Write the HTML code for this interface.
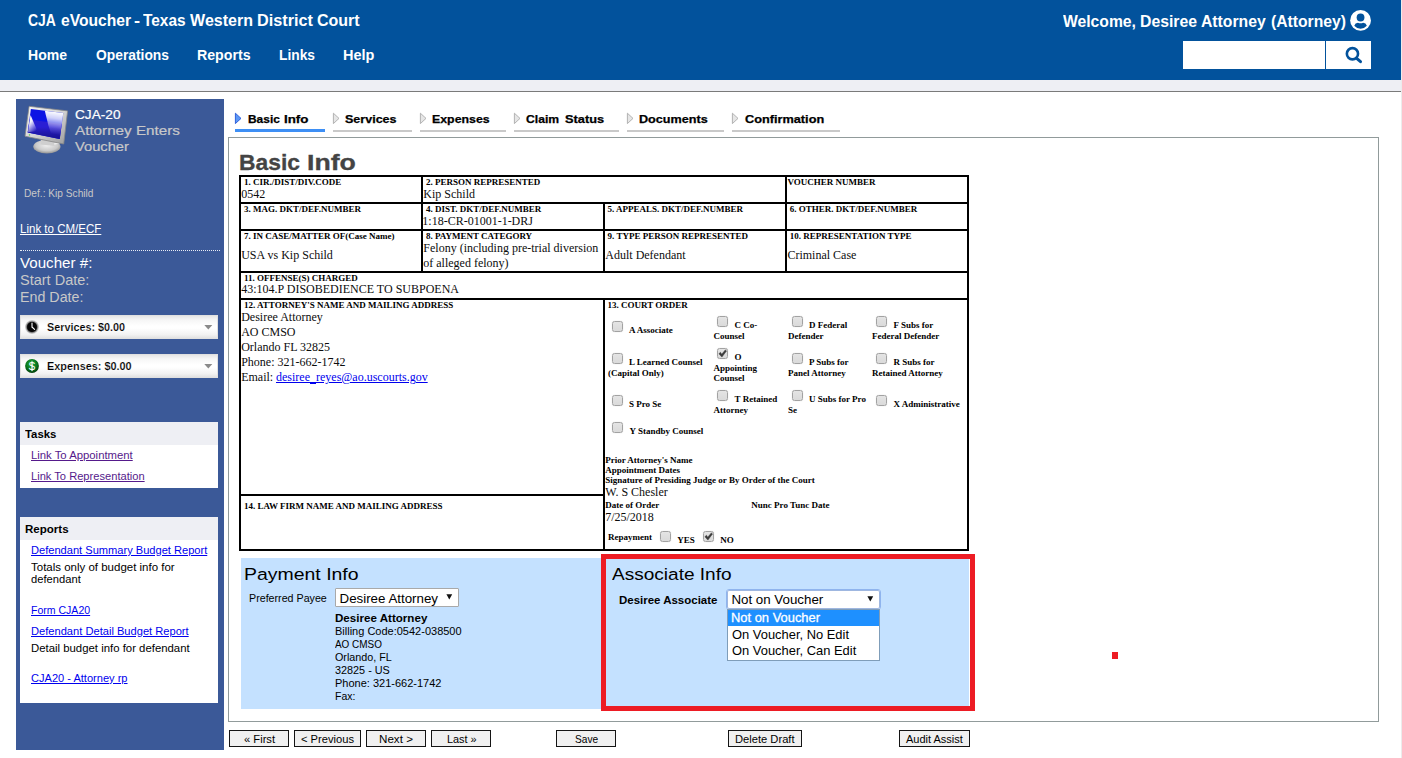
<!DOCTYPE html>
<html><head><meta charset="utf-8"><title>CJA eVoucher</title>
<style>
html,body{margin:0;padding:0;}
body{width:1402px;height:758px;position:relative;overflow:hidden;background:#fff;font-family:"Liberation Sans",sans-serif;}
.t{position:absolute;white-space:pre;line-height:normal;transform-origin:0 0;font-family:"Liberation Sans",sans-serif;display:block;}
.s{font-family:"Liberation Serif",serif;}
.b{position:absolute;box-sizing:border-box;}
.k{position:absolute;background:#000;}
.cb{position:absolute;box-sizing:border-box;width:11px;height:11px;border:1px solid #a2a2a2;border-radius:2.5px;background:linear-gradient(#e4e4e4,#dadada);box-shadow:0 0 1px rgba(0,0,0,0.22);}
.btn{position:absolute;box-sizing:border-box;height:17px;top:730px;border:1px solid #141414;background:#f0f0f0;}
svg{position:absolute;overflow:visible;}

</style></head>
<body>
<div class="b" style="left:0px;top:0px;width:1401px;height:80px;background:#02529c;"></div>
<div class="b" style="left:0px;top:80px;width:1401px;height:11px;background:#eeeff4;"></div>
<div class="b" style="left:0px;top:91px;width:1401px;height:1px;background:#7a7a7a;"></div>
<div class="b" style="left:1401px;top:0px;width:1px;height:758px;background:#ececec;"></div>
<div class="b" style="left:1183px;top:41px;width:142px;height:28px;background:#fff;"></div>
<div class="b" style="left:1326px;top:41px;width:45px;height:28px;background:#fff;"></div>
<svg style="left:1340px;top:44px" width="26" height="22" viewBox="1340 44 26 22"><circle cx="1352.45" cy="53.75" r="5.6" fill="none" stroke="#02529c" stroke-width="2.6"/><path d="M1356.7 58.4 L1360.5 61.7" stroke="#02529c" stroke-width="3" stroke-linecap="round"/></svg>
<svg style="left:1349px;top:9px" width="24" height="24" viewBox="1349 9 24 24"><g transform="translate(1360.55 20.4)"><circle cx="0" cy="0" r="10.4" fill="#fff"/><circle cx="0" cy="-2.9" r="3.9" fill="#02529c"/><path d="M-6.3 5.3 Q-5.4 2.5 -2.6 2.4 Q0 3.5 2.6 2.4 Q5.4 2.5 6.3 5.3 Q3.6 8.3 0 8.3 Q-3.6 8.3 -6.3 5.3Z" fill="#02529c"/></g></svg>
<div class="b" style="left:16px;top:99px;width:208px;height:651px;background:#3b5998;"></div>
<svg style="left:22px;top:102px" width="50" height="54" viewBox="22 102 50 54">
<defs>
<linearGradient id="mf" x1="0" y1="0" x2="1" y2="1"><stop offset="0" stop-color="#f6f6f6"/><stop offset="0.5" stop-color="#d4d4d4"/><stop offset="1" stop-color="#9c9c9c"/></linearGradient>
<linearGradient id="mg" gradientUnits="userSpaceOnUse" x1="55" y1="111.5" x2="52" y2="134"><stop offset="0" stop-color="#fff" stop-opacity="1"/><stop offset="0.3" stop-color="#fff" stop-opacity="0.8"/><stop offset="0.75" stop-color="#fff" stop-opacity="0.18"/><stop offset="1" stop-color="#fff" stop-opacity="0"/></linearGradient>
<linearGradient id="mg2" gradientUnits="userSpaceOnUse" x1="28.5" y1="124" x2="36" y2="131"><stop offset="0" stop-color="#fff" stop-opacity="0.95"/><stop offset="0.55" stop-color="#fff" stop-opacity="0.4"/><stop offset="1" stop-color="#fff" stop-opacity="0"/></linearGradient>
<linearGradient id="md" x1="0" y1="0" x2="0" y2="1"><stop offset="0" stop-color="#000" stop-opacity="0"/><stop offset="0.6" stop-color="#000" stop-opacity="0"/><stop offset="1" stop-color="#000040" stop-opacity="0.45"/></linearGradient>
<radialGradient id="mb" cx="0.5" cy="0.4" r="0.62"><stop offset="0" stop-color="#f0f0f0"/><stop offset="0.65" stop-color="#cacaca"/><stop offset="1" stop-color="#8a8a8a"/></radialGradient>
</defs>
<ellipse cx="46.9" cy="146.6" rx="13.6" ry="6.9" fill="url(#mb)"/>
<path d="M46 146.5 L58 141 L60 143.5Z" fill="#f2f2f2" opacity="0.8"/>
<path d="M41 139.5 L54 142 L54.5 146 L40.5 144.5Z" fill="#cfcfcf"/>
<polygon points="29.1,106.3 67.6,110.9 63.7,144 25,136.2" fill="url(#mf)" stroke="#868686" stroke-width="0.8" stroke-linejoin="round"/>
<polygon points="30.9,109.1 63.3,113 59.7,139 27.7,132.6" fill="#0c14e4"/>
<polygon points="29.6,119.5 61.8,124 59.7,139 27.7,132.6" fill="#2a1ed4"/>
<polygon points="30.9,109.1 63.3,113 59.7,139 27.7,132.6" fill="url(#md)"/>
<polygon points="44.8,110.8 63.3,113 60.2,135.5 51,133.6 48.4,125.5" fill="url(#mg)"/>
<polygon points="30.5,115 37.4,131 28,132.2" fill="url(#mg2)"/>
<circle cx="29.5" cy="134.9" r="0.7" fill="#3fcf3f"/>
</svg>
<div class="b" style="left:20px;top:250px;width:200px;height:1px;border-top:1px dotted #e8ecf5;"></div>
<div class="b" style="left:20px;top:315px;width:198px;height:24px;background:linear-gradient(#e6e6e6 0,#f6f6f6 18%,#fff 45%,#fff 55%,#f2f2f2 85%,#e2e2e2 100%);border:1px solid #e0e0e0;"></div>
<svg style="left:204px;top:325px" width="9" height="5" viewBox="0 0 9 5"><path d="M0.3 0 L8.3 0 L4.3 4.6Z" fill="#8a8a8a"/></svg>
<div class="b" style="left:20px;top:354px;width:198px;height:24px;background:linear-gradient(#e6e6e6 0,#f6f6f6 18%,#fff 45%,#fff 55%,#f2f2f2 85%,#e2e2e2 100%);border:1px solid #e0e0e0;"></div>
<svg style="left:204px;top:364px" width="9" height="5" viewBox="0 0 9 5"><path d="M0.3 0 L8.3 0 L4.3 4.6Z" fill="#8a8a8a"/></svg>
<svg style="left:24px;top:319px" width="16" height="16" viewBox="-8 -8 16 16"><circle r="7" fill="#dadada"/><circle r="6.5" fill="#b0b0b0"/><circle r="5.9" fill="#8a8a8a"/><circle r="5.3" fill="#4a4a4a"/><circle r="4.9" fill="#050505"/><path d="M0 0.3 L0 -3.9 M0 0 L2.6 2.3" stroke="#fff" stroke-width="1.1" stroke-linecap="round" fill="none"/></svg>
<svg style="left:24px;top:358px" width="16" height="16" viewBox="-8 -8 16 16"><defs><radialGradient id="gg" cx="0.45" cy="0.35" r="0.65"><stop offset="0" stop-color="#27a83e"/><stop offset="0.55" stop-color="#0a7d20"/><stop offset="1" stop-color="#013f0a"/></radialGradient></defs><circle r="6.9" fill="url(#gg)"/><text x="0" y="3.9" text-anchor="middle" font-family="Liberation Sans, sans-serif" font-size="11.5" fill="#fff">$</text><path d="M0 -5.2 L0 5.2" stroke="#fff" stroke-width="0.8"/></svg>
<div class="b" style="left:20px;top:422px;width:198px;height:66px;background:#fff;"></div>
<div class="b" style="left:20px;top:422px;width:198px;height:23px;background:#eeeff4;"></div>
<div class="b" style="left:20px;top:517px;width:198px;height:186px;background:#fff;"></div>
<div class="b" style="left:20px;top:517px;width:198px;height:23px;background:#eeeff4;"></div>
<div class="b" style="left:235px;top:129px;width:90px;height:3px;background:#3d8ff5;"></div>
<svg style="left:235px;top:112px" width="8" height="13" viewBox="0 0 8 13"><path d="M0.4 1.2 L6 6.4 L0.4 11.6Z" fill="#5b97f5" stroke="#2356d8" stroke-width="0.9" stroke-linejoin="round"/></svg>
<div class="b" style="left:333px;top:130px;width:79px;height:2px;background:#c9c9c9;"></div>
<svg style="left:333px;top:112px" width="8" height="13" viewBox="0 0 8 13"><path d="M0.4 1.2 L6 6.4 L0.4 11.6Z" fill="#e6e6e6" stroke="#ababab" stroke-width="0.9" stroke-linejoin="round"/></svg>
<div class="b" style="left:420px;top:130px;width:86px;height:2px;background:#c9c9c9;"></div>
<svg style="left:420px;top:112px" width="8" height="13" viewBox="0 0 8 13"><path d="M0.4 1.2 L6 6.4 L0.4 11.6Z" fill="#e6e6e6" stroke="#ababab" stroke-width="0.9" stroke-linejoin="round"/></svg>
<div class="b" style="left:514px;top:130px;width:105px;height:2px;background:#c9c9c9;"></div>
<svg style="left:514px;top:112px" width="8" height="13" viewBox="0 0 8 13"><path d="M0.4 1.2 L6 6.4 L0.4 11.6Z" fill="#e6e6e6" stroke="#ababab" stroke-width="0.9" stroke-linejoin="round"/></svg>
<div class="b" style="left:627px;top:130px;width:97px;height:2px;background:#c9c9c9;"></div>
<svg style="left:627px;top:112px" width="8" height="13" viewBox="0 0 8 13"><path d="M0.4 1.2 L6 6.4 L0.4 11.6Z" fill="#e6e6e6" stroke="#ababab" stroke-width="0.9" stroke-linejoin="round"/></svg>
<div class="b" style="left:732px;top:130px;width:108px;height:2px;background:#c9c9c9;"></div>
<svg style="left:732px;top:112px" width="8" height="13" viewBox="0 0 8 13"><path d="M0.4 1.2 L6 6.4 L0.4 11.6Z" fill="#e6e6e6" stroke="#ababab" stroke-width="0.9" stroke-linejoin="round"/></svg>
<div class="b" style="left:228px;top:137px;width:1151px;height:585px;border:1px solid #919b9b;"></div>
<div class="k" style="left:239px;top:175px;width:730px;height:2px;background:#000;"></div>
<div class="k" style="left:239px;top:202px;width:730px;height:2px;background:#000;"></div>
<div class="k" style="left:239px;top:229px;width:730px;height:2px;background:#000;"></div>
<div class="k" style="left:239px;top:271px;width:730px;height:2px;background:#000;"></div>
<div class="k" style="left:239px;top:298px;width:730px;height:2px;background:#000;"></div>
<div class="k" style="left:239px;top:549px;width:730px;height:2px;background:#000;"></div>
<div class="k" style="left:239px;top:494px;width:366px;height:2px;background:#000;"></div>
<div class="k" style="left:239px;top:175px;width:2px;height:376px;background:#000;"></div>
<div class="k" style="left:967px;top:175px;width:2px;height:376px;background:#000;"></div>
<div class="k" style="left:421px;top:175px;width:2px;height:98px;background:#000;"></div>
<div class="k" style="left:785px;top:175px;width:2px;height:98px;background:#000;"></div>
<div class="k" style="left:603px;top:202px;width:2px;height:71px;background:#000;"></div>
<div class="k" style="left:603px;top:298px;width:2px;height:253px;background:#000;"></div>
<div class="b" style="left:310px;top:383px;width:6px;height:1px;background:#0000ee;"></div>
<div class="cb" style="left:612px;top:321px"></div>
<div class="cb" style="left:717px;top:316px"></div>
<div class="cb" style="left:792px;top:316px"></div>
<div class="cb" style="left:876px;top:316px"></div>
<div class="cb" style="left:612px;top:353px"></div>
<div class="cb" style="left:717px;top:348px"></div>
<svg style="left:717px;top:348px" width="11" height="11" viewBox="0 0 11 11"><path d="M1.9 5.7 L3.5 4.3 L4.7 6.3 L8.3 1.9 L9.5 2.9 L4.9 9.1 Z" fill="#3a3a3a" stroke="#3a3a3a" stroke-width="0.5" stroke-linejoin="round"/></svg>
<div class="cb" style="left:792px;top:353px"></div>
<div class="cb" style="left:876px;top:353px"></div>
<div class="cb" style="left:612px;top:395px"></div>
<div class="cb" style="left:717px;top:390px"></div>
<div class="cb" style="left:792px;top:390px"></div>
<div class="cb" style="left:876px;top:395px"></div>
<div class="cb" style="left:612px;top:422px"></div>
<div class="cb" style="left:660px;top:531px"></div>
<div class="cb" style="left:703px;top:531px"></div>
<svg style="left:703px;top:531px" width="11" height="11" viewBox="0 0 11 11"><path d="M1.9 5.7 L3.5 4.3 L4.7 6.3 L8.3 1.9 L9.5 2.9 L4.9 9.1 Z" fill="#3a3a3a" stroke="#3a3a3a" stroke-width="0.5" stroke-linejoin="round"/></svg>
<div class="b" style="left:241px;top:558px;width:728px;height:151px;background:#c4e1ff;"></div>
<div class="b" style="left:335px;top:588px;width:124px;height:19px;background:#fff;border:1px solid #a9a9a9;border-radius:1px;"></div>
<svg style="left:446px;top:594px" width="7" height="6" viewBox="0 0 7 6"><path d="M0.4 0.2 L6.2 0.2 L3.3 5.6Z" fill="#111"/></svg>
<div class="b" style="left:726px;top:589px;width:155px;height:21px;border:1.5px solid #8fb4ee;border-radius:3px;background:#fff;"></div>
<div class="b" style="left:727px;top:590px;width:153px;height:19px;background:#fff;border:1px solid #9fb7e0;border-radius:2px;"></div>
<svg style="left:867px;top:596px" width="7" height="6" viewBox="0 0 7 6"><path d="M0.4 0.2 L6.2 0.2 L3.3 5.6Z" fill="#111"/></svg>
<div class="b" style="left:727px;top:609px;width:153px;height:52px;background:#fff;border:1px solid #7f9db9;"></div>
<div class="b" style="left:728px;top:610px;width:151px;height:16px;background:#1e90ff;"></div>
<div class="b" style="left:601px;top:554px;width:373.5px;height:157px;border:5.5px solid #ed1c24;"></div>
<div class="b" style="left:1112px;top:652px;width:6px;height:7px;background:#ed1c24;"></div>
<div class="btn" style="left:229px;width:60px"></div>
<div class="btn" style="left:294px;width:67px"></div>
<div class="btn" style="left:366px;width:60px"></div>
<div class="btn" style="left:431px;width:60px"></div>
<div class="btn" style="left:556px;width:60px"></div>
<div class="btn" style="left:728px;width:74px"></div>
<div class="btn" style="left:899px;width:71px"></div>
<span class="t" style="left:28.35px;top:12.00px;font-size:16px;color:#fff;font-weight:bold;transform:scaleX(0.8705);">CJA</span>
<span class="t" style="left:60.80px;top:12.00px;font-size:16px;color:#fff;font-weight:bold;transform:scaleX(0.9776);">eVoucher</span>
<span class="t" style="left:134.30px;top:12.00px;font-size:16px;color:#fff;font-weight:bold;transform:scaleX(1.1400);">-</span>
<span class="t" style="left:142.90px;top:12.00px;font-size:16px;color:#fff;font-weight:bold;transform:scaleX(0.9643);">Texas</span>
<span class="t" style="left:190.10px;top:12.00px;font-size:16px;color:#fff;font-weight:bold;">Western</span>
<span class="t" style="left:257.09px;top:12.00px;font-size:16px;color:#fff;font-weight:bold;transform:scaleX(1.0147);">District</span>
<span class="t" style="left:316.90px;top:12.00px;font-size:16px;color:#fff;font-weight:bold;">Court</span>
<span class="t" style="left:27.57px;top:45.90px;font-size:15px;color:#fff;font-weight:bold;transform:scaleX(0.9347);">Home</span>
<span class="t" style="left:95.60px;top:45.90px;font-size:15px;color:#fff;font-weight:bold;transform:scaleX(0.9221);">Operations</span>
<span class="t" style="left:196.75px;top:45.90px;font-size:15px;color:#fff;font-weight:bold;transform:scaleX(0.9452);">Reports</span>
<span class="t" style="left:278.68px;top:45.90px;font-size:15px;color:#fff;font-weight:bold;transform:scaleX(0.9198);">Links</span>
<span class="t" style="left:342.53px;top:45.90px;font-size:15px;color:#fff;font-weight:bold;transform:scaleX(0.9667);">Help</span>
<span class="t" style="left:1062.70px;top:13.00px;font-size:16px;color:#fff;font-weight:bold;transform:scaleX(0.9804);">Welcome,</span>
<span class="t" style="left:1139.81px;top:13.00px;font-size:16px;color:#fff;font-weight:bold;transform:scaleX(0.9856);">Desiree</span>
<span class="t" style="left:1201.30px;top:13.00px;font-size:16px;color:#fff;font-weight:bold;transform:scaleX(0.9836);">Attorney</span>
<span class="t" style="left:1270.90px;top:13.00px;font-size:16px;color:#fff;font-weight:bold;transform:scaleX(0.9815);">(Attorney)</span>
<span class="t" style="left:75.30px;top:108.00px;font-size:12.4px;color:#fff;-webkit-text-stroke:0.2px #fff;transform:scaleX(1.1008);">CJA-20</span>
<span class="t" style="left:75.30px;top:123.90px;font-size:12.4px;color:#c8c8c8;-webkit-text-stroke:0.2px #c8c8c8;transform:scaleX(1.2288);">Attorney Enters</span>
<span class="t" style="left:75.30px;top:139.90px;font-size:12.4px;color:#c8c8c8;-webkit-text-stroke:0.2px #c8c8c8;transform:scaleX(1.1844);">Voucher</span>
<span class="t" style="left:23.50px;top:187.90px;font-size:10.4px;color:#c8c8c8;transform:scaleX(0.9782);">Def.: Kip Schild</span>
<span class="t" style="left:20.00px;top:222.00px;font-size:12px;color:#fff;text-decoration:underline;transform:scaleX(0.9602);">Link to CM/ECF</span>
<span class="t" style="left:20.00px;top:254.90px;font-size:14px;color:#fff;transform:scaleX(1.0810);">Voucher #:</span>
<span class="t" style="left:20.30px;top:271.90px;font-size:14px;color:#c8c8c8;transform:scaleX(1.0359);">Start Date:</span>
<span class="t" style="left:19.98px;top:288.90px;font-size:14px;color:#c8c8c8;transform:scaleX(1.0187);">End Date:</span>
<span class="t" style="left:46.90px;top:320.80px;font-size:11px;color:#000;font-weight:bold;-webkit-text-stroke:0.18px #fbfbfb;transform:scaleX(0.9825);">Services: $0.00</span>
<span class="t" style="left:46.50px;top:359.90px;font-size:11px;color:#000;font-weight:bold;-webkit-text-stroke:0.18px #fbfbfb;transform:scaleX(0.9884);">Expenses: $0.00</span>
<span class="t" style="left:25.40px;top:428.00px;font-size:11px;color:#000;font-weight:bold;transform:scaleX(1.0345);">Tasks</span>
<span class="t" style="left:31.00px;top:448.80px;font-size:11px;color:#551a8b;text-decoration:underline;transform:scaleX(1.0290);">Link To Appointment</span>
<span class="t" style="left:31.00px;top:469.90px;font-size:11px;color:#551a8b;text-decoration:underline;transform:scaleX(1.0116);">Link To Representation</span>
<span class="t" style="left:25.40px;top:523.00px;font-size:11px;color:#000;font-weight:bold;transform:scaleX(1.0496);">Reports</span>
<span class="t" style="left:31.00px;top:543.80px;font-size:11px;color:#0000ee;text-decoration:underline;transform:scaleX(1.0079);">Defendant Summary Budget Report</span>
<span class="t" style="left:31.00px;top:561.00px;font-size:11px;color:#000;transform:scaleX(1.0441);">Totals only of budget info for</span>
<span class="t" style="left:31.00px;top:573.30px;font-size:11px;color:#000;transform:scaleX(1.0168);">defendant</span>
<span class="t" style="left:31.00px;top:604.00px;font-size:11px;color:#0000ee;text-decoration:underline;transform:scaleX(0.9575);">Form CJA20</span>
<span class="t" style="left:31.00px;top:625.00px;font-size:11px;color:#0000ee;text-decoration:underline;transform:scaleX(1.0111);">Defendant Detail Budget Report</span>
<span class="t" style="left:31.00px;top:641.60px;font-size:11px;color:#000;transform:scaleX(1.0336);">Detail budget info for defendant</span>
<span class="t" style="left:31.00px;top:671.80px;font-size:11px;color:#0000ee;text-decoration:underline;transform:scaleX(1.0054);">CJA20 - Attorney rp</span>
<span class="t" style="left:247.50px;top:113.00px;font-size:11px;color:#000;font-weight:bold;-webkit-text-stroke:0.25px #000;transform:scaleX(1.0843);">Basic</span>
<span class="t" style="left:283.90px;top:113.00px;font-size:11px;color:#000;font-weight:bold;-webkit-text-stroke:0.25px #000;transform:scaleX(1.2134);">Info</span>
<span class="t" style="left:345.00px;top:113.00px;font-size:11px;color:#000;font-weight:bold;-webkit-text-stroke:0.25px #000;transform:scaleX(1.1386);">Services</span>
<span class="t" style="left:432.20px;top:113.00px;font-size:11px;color:#000;font-weight:bold;-webkit-text-stroke:0.25px #000;transform:scaleX(1.1220);">Expenses</span>
<span class="t" style="left:526.30px;top:113.00px;font-size:11px;color:#000;font-weight:bold;-webkit-text-stroke:0.25px #000;transform:scaleX(1.1036);">Claim</span>
<span class="t" style="left:564.80px;top:113.00px;font-size:11px;color:#000;font-weight:bold;-webkit-text-stroke:0.25px #000;transform:scaleX(1.1612);">Status</span>
<span class="t" style="left:639.40px;top:113.00px;font-size:11px;color:#000;font-weight:bold;-webkit-text-stroke:0.25px #000;transform:scaleX(1.1475);">Documents</span>
<span class="t" style="left:744.50px;top:113.00px;font-size:11px;color:#000;font-weight:bold;-webkit-text-stroke:0.25px #000;transform:scaleX(1.1569);">Confirmation</span>
<span class="t" style="left:239.44px;top:149.80px;font-size:21.6px;color:#444;font-weight:bold;-webkit-text-stroke:0.3px #444;transform:scaleX(1.0581);">Basic</span>
<span class="t" style="left:307.17px;top:149.80px;font-size:21.6px;color:#444;font-weight:bold;-webkit-text-stroke:0.3px #444;transform:scaleX(1.2350);">Info</span>
<span class="t s" style="left:244.00px;top:176.80px;font-size:9px;color:#000;font-weight:bold;">1. CIR./DIST/DIV.CODE</span>
<span class="t s" style="left:426.00px;top:176.80px;font-size:9px;color:#000;font-weight:bold;">2. PERSON REPRESENTED</span>
<span class="t s" style="left:787.40px;top:176.80px;font-size:9px;color:#000;font-weight:bold;">VOUCHER NUMBER</span>
<span class="t s" style="left:244.00px;top:203.60px;font-size:9px;color:#000;font-weight:bold;">3. MAG. DKT/DEF.NUMBER</span>
<span class="t s" style="left:426.00px;top:203.60px;font-size:9px;color:#000;font-weight:bold;">4. DIST. DKT/DEF.NUMBER</span>
<span class="t s" style="left:607.60px;top:203.60px;font-size:9px;color:#000;font-weight:bold;">5. APPEALS. DKT/DEF.NUMBER</span>
<span class="t s" style="left:789.80px;top:203.60px;font-size:9px;color:#000;font-weight:bold;">6. OTHER. DKT/DEF.NUMBER</span>
<span class="t s" style="left:244.00px;top:230.70px;font-size:9px;color:#000;font-weight:bold;">7. IN CASE/MATTER OF(Case Name)</span>
<span class="t s" style="left:426.00px;top:230.70px;font-size:9px;color:#000;font-weight:bold;">8. PAYMENT CATEGORY</span>
<span class="t s" style="left:607.60px;top:230.70px;font-size:9px;color:#000;font-weight:bold;">9. TYPE PERSON REPRESENTED</span>
<span class="t s" style="left:789.80px;top:230.70px;font-size:9px;color:#000;font-weight:bold;">10. REPRESENTATION TYPE</span>
<span class="t s" style="left:244.00px;top:272.90px;font-size:9px;color:#000;font-weight:bold;">11. OFFENSE(S) CHARGED</span>
<span class="t s" style="left:244.00px;top:299.60px;font-size:9px;color:#000;font-weight:bold;">12. ATTORNEY&#x27;S NAME AND MAILING ADDRESS</span>
<span class="t s" style="left:607.60px;top:299.60px;font-size:9px;color:#000;font-weight:bold;">13. COURT ORDER</span>
<span class="t s" style="left:244.00px;top:500.90px;font-size:9px;color:#000;font-weight:bold;">14. LAW FIRM NAME AND MAILING ADDRESS</span>
<span class="t s" style="left:241.20px;top:187.00px;font-size:12px;color:#0c0c0c;">0542</span>
<span class="t s" style="left:423.30px;top:187.00px;font-size:12px;color:#0c0c0c;">Kip Schild</span>
<span class="t s" style="left:422.30px;top:214.00px;font-size:12px;color:#0c0c0c;">1:18-CR-01001-1-DRJ</span>
<span class="t s" style="left:241.20px;top:248.00px;font-size:12px;color:#0c0c0c;">USA vs Kip Schild</span>
<span class="t s" style="left:423.30px;top:241.00px;font-size:12px;color:#0c0c0c;">Felony (including pre-trial diversion</span>
<span class="t s" style="left:423.30px;top:256.00px;font-size:12px;color:#0c0c0c;">of alleged felony)</span>
<span class="t s" style="left:605.30px;top:248.00px;font-size:12px;color:#0c0c0c;">Adult Defendant</span>
<span class="t s" style="left:787.40px;top:248.00px;font-size:12px;color:#0c0c0c;">Criminal Case</span>
<span class="t s" style="left:241.20px;top:282.00px;font-size:12px;color:#0c0c0c;">43:104.P DISOBEDIENCE TO SUBPOENA</span>
<span class="t s" style="left:241.20px;top:310.00px;font-size:12px;color:#0c0c0c;">Desiree Attorney</span>
<span class="t s" style="left:241.20px;top:325.00px;font-size:12px;color:#0c0c0c;">AO CMSO</span>
<span class="t s" style="left:241.20px;top:340.00px;font-size:12px;color:#0c0c0c;">Orlando FL 32825</span>
<span class="t s" style="left:241.20px;top:355.00px;font-size:12px;color:#0c0c0c;">Phone: 321-662-1742</span>
<span class="t s" style="left:241.20px;top:370.00px;font-size:12px;color:#0c0c0c;">Email: </span>
<span class="t s" style="left:276.00px;top:370.00px;font-size:12px;color:#0000ee;text-decoration:underline;">desiree_reyes@ao.uscourts.gov</span>
<span class="t s" style="left:629.00px;top:324.70px;font-size:9px;color:#000;font-weight:bold;">A Associate</span>
<span class="t s" style="left:734.60px;top:320.00px;font-size:9px;color:#000;font-weight:bold;">C Co-</span>
<span class="t s" style="left:713.50px;top:330.70px;font-size:9px;color:#000;font-weight:bold;">Counsel</span>
<span class="t s" style="left:809.00px;top:320.00px;font-size:9px;color:#000;font-weight:bold;">D Federal</span>
<span class="t s" style="left:788.00px;top:330.70px;font-size:9px;color:#000;font-weight:bold;">Defender</span>
<span class="t s" style="left:893.50px;top:320.00px;font-size:9px;color:#000;font-weight:bold;">F Subs for</span>
<span class="t s" style="left:872.00px;top:330.70px;font-size:9px;color:#000;font-weight:bold;">Federal Defender</span>
<span class="t s" style="left:629.00px;top:357.00px;font-size:9px;color:#000;font-weight:bold;">L Learned Counsel</span>
<span class="t s" style="left:608.00px;top:368.00px;font-size:9px;color:#000;font-weight:bold;">(Capital Only)</span>
<span class="t s" style="left:734.60px;top:351.80px;font-size:9px;color:#000;font-weight:bold;">O</span>
<span class="t s" style="left:713.50px;top:362.50px;font-size:9px;color:#000;font-weight:bold;">Appointing</span>
<span class="t s" style="left:713.50px;top:372.80px;font-size:9px;color:#000;font-weight:bold;">Counsel</span>
<span class="t s" style="left:809.00px;top:357.00px;font-size:9px;color:#000;font-weight:bold;">P Subs for</span>
<span class="t s" style="left:788.00px;top:368.00px;font-size:9px;color:#000;font-weight:bold;">Panel Attorney</span>
<span class="t s" style="left:893.50px;top:357.00px;font-size:9px;color:#000;font-weight:bold;">R Subs for</span>
<span class="t s" style="left:872.00px;top:368.00px;font-size:9px;color:#000;font-weight:bold;">Retained Attorney</span>
<span class="t s" style="left:629.00px;top:398.80px;font-size:9px;color:#000;font-weight:bold;">S Pro Se</span>
<span class="t s" style="left:734.60px;top:393.90px;font-size:9px;color:#000;font-weight:bold;">T Retained</span>
<span class="t s" style="left:713.50px;top:404.80px;font-size:9px;color:#000;font-weight:bold;">Attorney</span>
<span class="t s" style="left:809.00px;top:393.90px;font-size:9px;color:#000;font-weight:bold;">U Subs for Pro</span>
<span class="t s" style="left:788.00px;top:404.80px;font-size:9px;color:#000;font-weight:bold;">Se</span>
<span class="t s" style="left:893.50px;top:398.80px;font-size:9px;color:#000;font-weight:bold;">X Administrative</span>
<span class="t s" style="left:629.50px;top:425.70px;font-size:9px;color:#000;font-weight:bold;">Y Standby Counsel</span>
<span class="t s" style="left:605.20px;top:454.80px;font-size:9px;color:#000;font-weight:bold;">Prior Attorney&#x27;s Name</span>
<span class="t s" style="left:605.20px;top:464.90px;font-size:9px;color:#000;font-weight:bold;">Appointment Dates</span>
<span class="t s" style="left:605.20px;top:474.90px;font-size:9px;color:#000;font-weight:bold;">Signature of Presiding Judge or By Order of the Court</span>
<span class="t s" style="left:605.20px;top:485.00px;font-size:12px;color:#0c0c0c;">W. S Chesler</span>
<span class="t s" style="left:605.20px;top:499.70px;font-size:9px;color:#000;font-weight:bold;">Date of Order</span>
<span class="t s" style="left:751.30px;top:499.70px;font-size:9px;color:#000;font-weight:bold;">Nunc Pro Tunc Date</span>
<span class="t s" style="left:605.20px;top:510.00px;font-size:12px;color:#0c0c0c;">7/25/2018</span>
<span class="t s" style="left:608.00px;top:532.00px;font-size:9px;color:#000;font-weight:bold;">Repayment</span>
<span class="t s" style="left:677.30px;top:534.70px;font-size:9px;color:#000;font-weight:bold;">YES</span>
<span class="t s" style="left:720.30px;top:534.70px;font-size:9px;color:#000;font-weight:bold;">NO</span>
<span class="t" style="left:244.47px;top:564.40px;font-size:17.2px;color:#000;transform:scaleX(1.1313);">Payment Info</span>
<span class="t" style="left:248.50px;top:591.80px;font-size:11.4px;color:#000;transform:scaleX(0.9382);">Preferred Payee</span>
<span class="t" style="left:339.50px;top:590.70px;font-size:13.33px;color:#000;">Desiree Attorney</span>
<span class="t" style="left:335.00px;top:612.00px;font-size:11px;color:#000;font-weight:bold;transform:scaleX(1.0538);">Desiree Attorney</span>
<span class="t" style="left:335.00px;top:625.00px;font-size:11px;color:#000;">Billing Code:0542-038500</span>
<span class="t" style="left:335.00px;top:638.00px;font-size:11px;color:#000;transform:scaleX(0.9028);">AO CMSO</span>
<span class="t" style="left:335.00px;top:651.00px;font-size:11px;color:#000;transform:scaleX(0.9782);">Orlando, FL</span>
<span class="t" style="left:335.00px;top:664.00px;font-size:11px;color:#000;transform:scaleX(0.9854);">32825 - US</span>
<span class="t" style="left:335.00px;top:677.00px;font-size:11px;color:#000;">Phone: 321-662-1742</span>
<span class="t" style="left:335.00px;top:690.00px;font-size:11px;color:#000;transform:scaleX(0.9514);">Fax:</span>
<span class="t" style="left:612.00px;top:564.40px;font-size:17.2px;color:#000;transform:scaleX(1.1071);">Associate Info</span>
<span class="t" style="left:619.20px;top:593.80px;font-size:11px;color:#000;font-weight:bold;transform:scaleX(1.0427);">Desiree Associate</span>
<span class="t" style="left:731.40px;top:592.00px;font-size:13.33px;color:#000;">Not on Voucher</span>
<span class="t" style="left:731.43px;top:610.00px;font-size:13.33px;color:#fff;-webkit-text-stroke:0.3px #fff;transform:scaleX(0.9689);">Not on Voucher</span>
<span class="t" style="left:732.40px;top:626.50px;font-size:13.33px;color:#000;transform:scaleX(0.9689);">On Voucher, No Edit</span>
<span class="t" style="left:732.40px;top:642.50px;font-size:13.33px;color:#000;transform:scaleX(0.9691);">On Voucher, Can Edit</span>
<span class="t" style="left:243.50px;top:732.80px;font-size:11px;color:#000;transform:scaleX(1.0164);">« First</span>
<span class="t" style="left:300.50px;top:732.80px;font-size:11px;color:#000;transform:scaleX(1.0137);">&lt; Previous</span>
<span class="t" style="left:379.00px;top:732.80px;font-size:11px;color:#000;transform:scaleX(1.0577);">Next &gt;</span>
<span class="t" style="left:446.50px;top:732.80px;font-size:11px;color:#000;transform:scaleX(0.9884);">Last »</span>
<span class="t" style="left:574.50px;top:732.80px;font-size:11px;color:#000;transform:scaleX(0.9217);">Save</span>
<span class="t" style="left:735.30px;top:732.80px;font-size:11px;color:#000;transform:scaleX(1.0148);">Delete Draft</span>
<span class="t" style="left:906.00px;top:732.80px;font-size:11px;color:#000;">Audit Assist</span>
</body></html>
